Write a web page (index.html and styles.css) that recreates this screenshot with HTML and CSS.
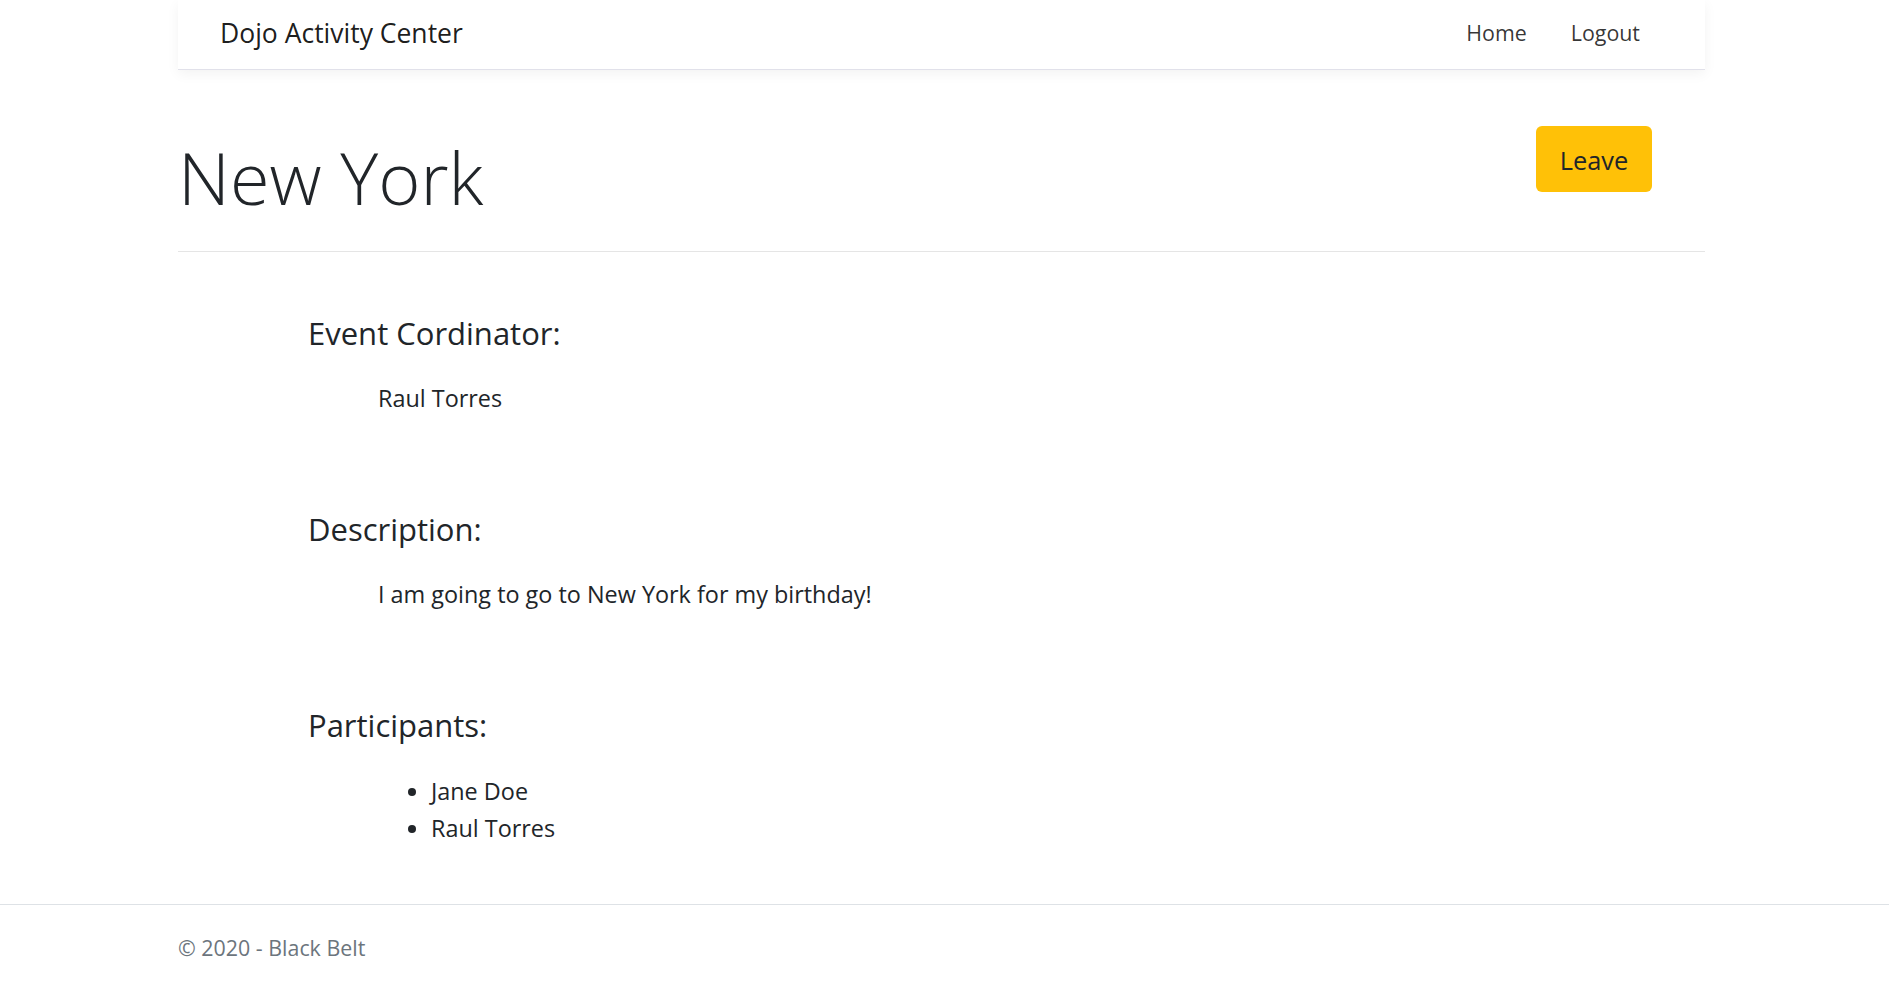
FILE: index.html
```html
<!DOCTYPE html>
<html lang="en">
<head>
<meta charset="utf-8">
<title>New York - Dojo Activity Center</title>
<link rel="stylesheet" href="styles.css">
</head>
<body>
<header class="site-header">
  <nav class="navbar">
    <a class="brand" href="#">Dojo Activity Center</a>
    <ul class="nav-links">
      <li><a href="#">Home</a></li>
      <li><a href="#">Logout</a></li>
    </ul>
  </nav>
</header>
<main class="container">
  <div class="title-row">
    <h1 class="title">New York</h1>
    <button class="btn-leave" type="button">Leave</button>
  </div>
  <hr class="divider">
  <section class="detail">
    <h3 class="detail-heading">Event Cordinator:</h3>
    <p class="detail-text">Raul Torres</p>
  </section>
  <section class="detail">
    <h3 class="detail-heading">Description:</h3>
    <p class="detail-text">I am going to go to New York for my birthday!</p>
  </section>
  <section class="detail">
    <h3 class="detail-heading">Participants:</h3>
    <ul class="participants">
      <li>Jane Doe</li>
      <li>Raul Torres</li>
    </ul>
  </section>
</main>
<footer class="site-footer">
  <div class="footer-inner">&copy; 2020 - Black Belt</div>
</footer>
</body>
</html>
```

FILE: styles.css
```css
* { box-sizing: border-box; }

html, body { height: 100%; }

body {
  margin: 0;
  font-family: "Open Sans", "Noto Sans", sans-serif;
  font-size: 21.4px;
  color: #212529;
  background: #fff;
  display: flex;
  flex-direction: column;
  min-height: 100vh;
}

a { text-decoration: none; }

.site-header {
  width: 1527px;
  margin-left: 178px;
}

.navbar {
  height: 70px;
  display: flex;
  align-items: center;
  justify-content: space-between;
  padding: 0 65px 4px 42px;
  background: #fff;
  border-bottom: 1px solid #e1e1ea;
  box-shadow: 0 4px 12px rgba(0, 0, 0, 0.05);
}

.brand {
  font-size: 26.5px;
  line-height: 36px;
  color: rgba(0, 0, 0, 0.9);
}

.nav-links {
  list-style: none;
  display: flex;
  gap: 44px;
  margin: 0;
  padding: 0;
}

.nav-links a {
  color: rgba(0, 0, 0, 0.8);
  font-size: 21.4px;
  line-height: 30px;
}

.container {
  width: 1527px;
  margin-left: 178px;
  flex: 1;
}

.title-row {
  display: flex;
  justify-content: space-between;
  align-items: flex-start;
  padding-right: 53px;
}

.title {
  margin: 58px 0 0;
  font-size: 72px;
  font-weight: 300;
  line-height: 98px;
}

.btn-leave {
  margin-top: 56px;
  width: 116px;
  height: 66px;
  padding: 2px 0 0;
  background: #ffc107;
  border: none;
  border-radius: 6px;
  font-family: inherit;
  font-size: 25.4px;
  color: #212529;
}

.divider {
  margin: 25px 0 0;
  border: 0;
  border-top: 1px solid #e5e5e5;
}

.detail {
  padding-left: 130px;
}

.detail-heading {
  margin: 62px 0 0;
  font-size: 31px;
  font-weight: 400;
  line-height: 38px;
}

.detail + .detail .detail-heading {
  margin-top: 97px;
}

.detail-text {
  margin: 32px 0 0 70px;
  font-size: 23.4px;
  line-height: 29px;
}

.participants {
  margin: 29px 0 0 70px;
  padding-left: 53px;
  font-size: 23.4px;
  line-height: 37px;
}

.site-footer {
  border-top: 1px solid #dee2e6;
  height: 80px;
}

.footer-inner {
  margin-left: 178px;
  padding-top: 28px;
  line-height: 29px;
  color: #6c757d;
}
```
